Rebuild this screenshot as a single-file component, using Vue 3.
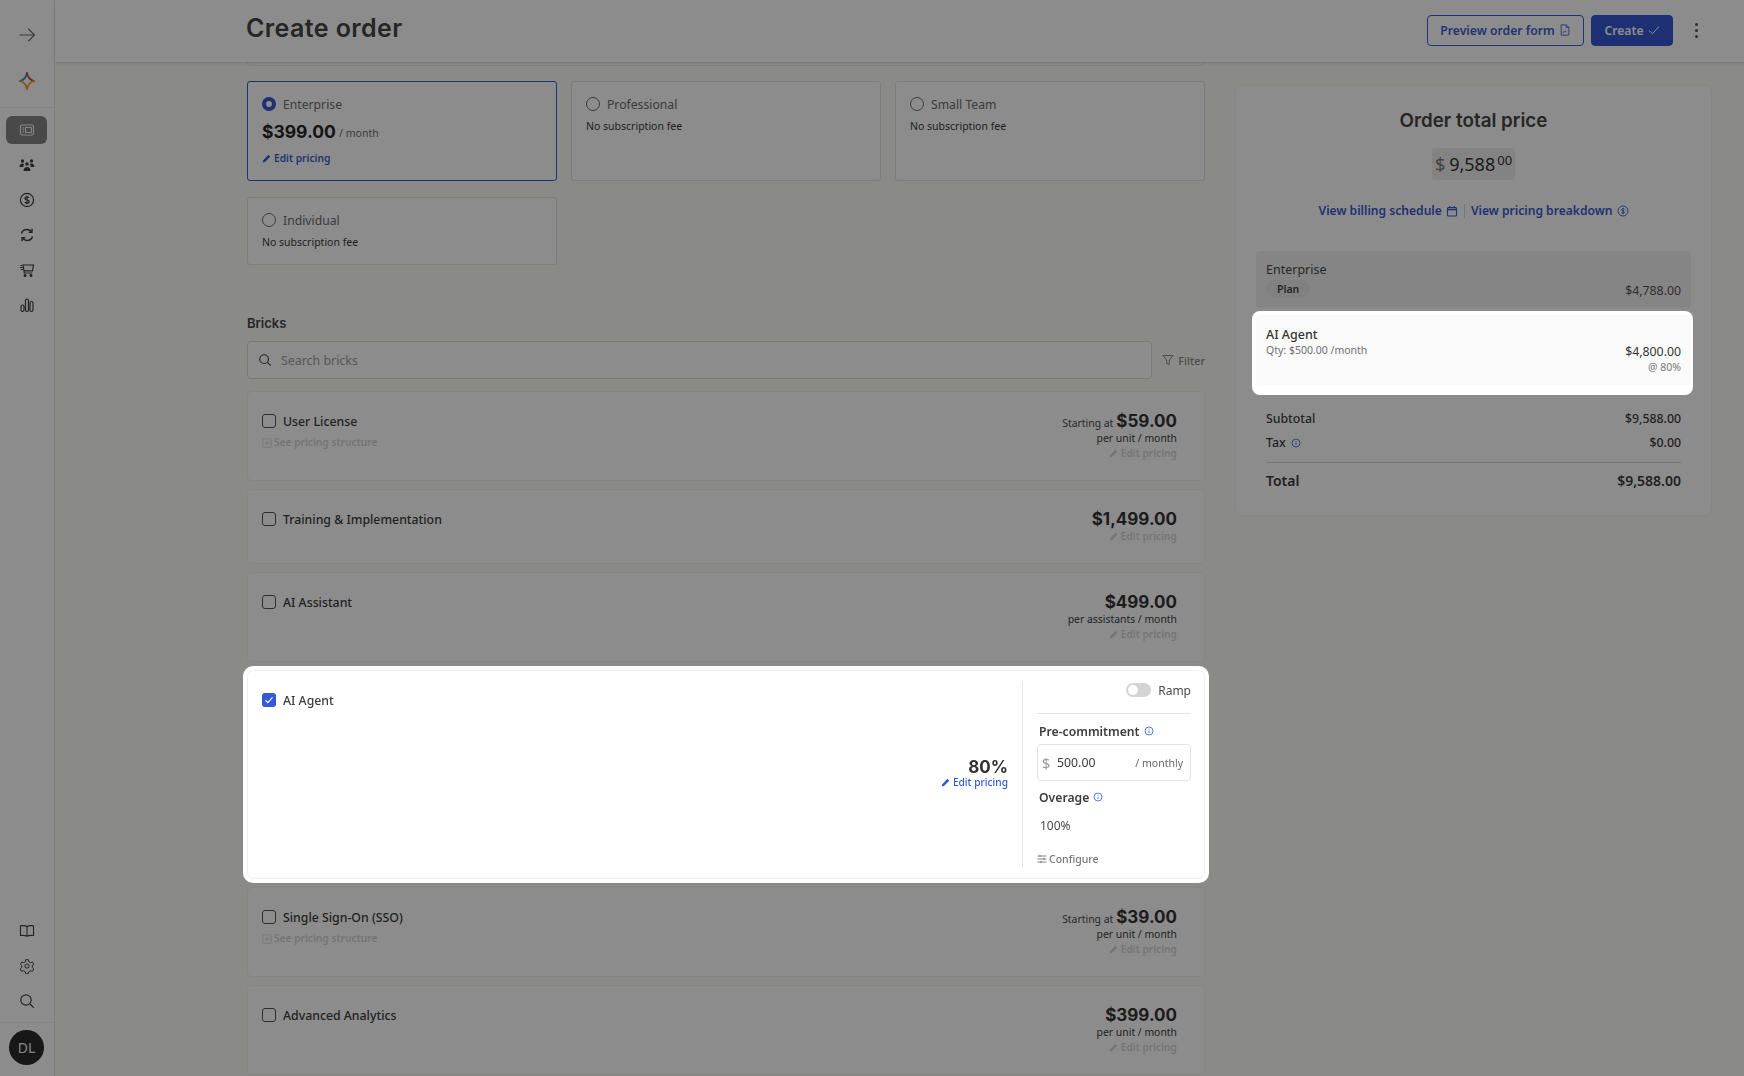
<template>
  <div class="page">
    <aside class="sidebar">
      <div class="side-top">
        <svg class="ico20" viewBox="0 0 24 24" fill="none" stroke="currentColor" stroke-width="1.3"><path d="M3 12h18M13.500 4.500 21 12l-7.500 7.500" /></svg>
      </div>
      <div class="side-logo">
        <svg width="18" height="20" viewBox="0 0 18 20" fill="none" stroke-width="1.8" stroke-linecap="round">
          <path d="M9 2C8.400 6 6.500 8.600 2 10" stroke="#3f9a9a" />
          <path d="M9 2c.6 4 2.500 6.600 7 8" stroke="#c74f4f" />
          <path d="M2 10c4.500 1.400 6.400 4 7 8" stroke="#e6952f" />
          <path d="M16 10c-4.500 1.400-6.400 4-7 8" stroke="#f0a030" />
        </svg>
      </div>
      <nav class="side-nav">
        <a class="nav-item active">
          <svg class="ico16" viewBox="0 0 16 16" fill="none" stroke="currentColor" stroke-width="1.1"><rect x="1.500" y="3" width="13" height="10" rx="1.500" /><path d="M3.500 6h1.500M3.500 8h1.500M3.500 10h1.500M6.500 5.500h6v5h-6z" /></svg>
        </a>
        <a class="nav-item">
          <svg class="ico16" viewBox="0 0 16 16" fill="currentColor"><circle cx="3.500" cy="4" r="1.700" /><circle cx="12.500" cy="4" r="1.700" /><circle cx="8" cy="7" r="1.800" /><path d="M.5 10c0-2 1.300-3.500 3-3.500.8 0 1.300.3 1.700.7-.6.7-.9 1.500-.9 2.800zM15.500 10c0-2-1.300-3.500-3-3.500-.8 0-1.300.3-1.700.7.6.7.9 1.500.9 2.800z" /><path d="M4.500 14c0-2.500 1.500-4 3.500-4s3.500 1.500 3.500 4z" /></svg>
        </a>
        <a class="nav-item">
          <svg class="ico16" viewBox="0 0 16 16" fill="none" stroke="currentColor" stroke-width="1.200"><circle cx="8" cy="8" r="6.600" /><path d="M10 5.800C9.500 5 8.800 4.800 8 4.800c-1.200 0-2 .6-2 1.600 0 2.200 4.200 1 4.200 3.200 0 1-.9 1.600-2.200 1.600-.9 0-1.700-.3-2.200-1.100M8 3.800v8.400" /></svg>
        </a>
        <a class="nav-item">
          <svg class="ico16" viewBox="0 0 16 16" fill="none" stroke="currentColor" stroke-width="1.400"><path d="M2.500 6.500C3.200 4 5.300 2.500 8 2.500c1.800 0 3.300.8 4.500 2.200M13.500 9.500C12.800 12 10.700 13.500 8 13.500c-1.800 0-3.300-.8-4.500-2.200" /><path d="M13 1.800v3.400H9.700M3 14.200v-3.400h3.300" /></svg>
        </a>
        <a class="nav-item">
          <svg class="ico16" viewBox="0 0 16 16" fill="none" stroke="currentColor" stroke-width="1.200"><path d="M4 3h10.500l-1 5.800H5L4 3zM5 8.800l.2 2.200h8M1.500 3.500H3M1 5.500h2.500M1.800 7.500h2" /><circle cx="6" cy="13.500" r=".9" fill="currentColor" /><circle cx="12" cy="13.500" r=".9" fill="currentColor" /></svg>
        </a>
        <a class="nav-item">
          <svg class="ico16" viewBox="0 0 16 16" fill="none" stroke="currentColor" stroke-width="1.200"><rect x="2" y="8" width="3" height="6.500" rx="1.500" /><rect x="6.500" y="2" width="3" height="12.500" rx="1.500" /><rect x="11" y="4.500" width="3" height="10" rx="1.500" /></svg>
        </a>
      </nav>
      <nav class="side-bottom">
        <a class="nav-item">
          <svg class="ico16" viewBox="0 0 16 16" fill="none" stroke="currentColor" stroke-width="1.100"><path d="M8 3.500C6.500 2.600 4 2.500 1.500 2.800v9.700c2.500-.3 5-.2 6.500.8 1.500-1 4-1.100 6.500-.8V2.800C12 2.500 9.500 2.600 8 3.500zM8 3.500v9.800" /></svg>
        </a>
        <a class="nav-item">
          <svg class="ico16" viewBox="0 0 24 24" fill="none" stroke="currentColor" stroke-width="1.500"><circle cx="12" cy="12" r="3.200" /><path d="M10 2.500h4l.7 3 2.500 1.400 3-.9 2 3.500-2.300 2.100v2.800l2.300 2.100-2 3.500-3-.9-2.500 1.400-.7 3h-4l-.7-3-2.500-1.400-3 .9-2-3.500 2.300-2.100v-2.800L2.300 9.500l2-3.500 3 .9 2.500-1.400z" /></svg>
        </a>
        <a class="nav-item">
          <svg class="ico16" viewBox="0 0 16 16" fill="none" stroke="currentColor" stroke-width="1.200"><circle cx="7" cy="7" r="5.200" /><path d="m11 11 3.800 3.800" /></svg>
        </a>
      </nav>
      <div class="side-user">
        <div class="avatar">DL</div>
      </div>
    </aside>

    <div class="main">
      <header class="topbar">
        <h1>Create order</h1>
        <div class="top-actions">
          <button class="btn btn-outline">
            Preview order form
            <svg class="ico12" viewBox="0 0 12 14" fill="none" stroke="currentColor" stroke-width="1"><path d="M1.500 1h6l3 3v9h-9zM7.500 1v3h3M3.500 10.500l1.500-2 1 1 1.500-1.500" /></svg>
          </button>
          <button class="btn btn-primary">
            Create
            <svg class="ico12" viewBox="0 0 12 12" fill="none" stroke="currentColor" stroke-width="1"><path d="m1 6.500 3.500 3.200L11 2.500" /></svg>
          </button>
          <div class="kebab"><i></i><i></i><i></i></div>
        </div>
      </header>

      <div class="content">
        <section class="left">
          <div class="cut-card"></div>
          <div class="plans">
            <div v-for="plan in plans" :key="plan.name" class="plan" :class="{ selected: plan.selected }">
              <div class="plan-name">
                <span class="radio"></span>
                {{ plan.name }}
              </div>
              <template v-if="plan.selected">
                <div class="plan-price"><b>$399.00</b> <span>/ month</span></div>
                <a class="edit">
                  <svg class="pen" viewBox="0 0 12 12" fill="currentColor"><path d="M8.500 1 11 3.500 4 10.500l-3 .7.700-3z" /></svg>
                  Edit pricing
                </a>
              </template>
              <div v-else class="plan-fee">No subscription fee</div>
            </div>
          </div>

          <h2 class="bricks-title">Bricks</h2>
          <div class="search-row">
            <div class="search">
              <svg class="ico14" viewBox="0 0 16 16" fill="none" stroke="currentColor" stroke-width="1.300"><circle cx="7" cy="7" r="5" /><path d="m10.800 10.800 3.700 3.700" /></svg>
              <span>Search bricks</span>
            </div>
            <div class="filter">
              <svg class="ico12" viewBox="0 0 12 12" fill="none" stroke="currentColor" stroke-width="1"><path d="M1 1.500h10L7.300 6v4.500l-2.600-1V6z" /></svg>
              Filter
            </div>
          </div>

          <div class="bricks">
            <template v-for="brick in bricks" :key="brick.name">
              <div v-if="brick.active" class="brick ai-brick">
                <div class="ai-main">
                  <label class="check-row">
                    <span class="check checked">
                      <svg viewBox="0 0 12 12" fill="none" stroke="#fff" stroke-width="1"><path d="m3 6.200 2 2 4-4.400" /></svg>
                    </span>
                    {{ brick.name }}
                  </label>
                  <div class="ai-price">
                    <div class="amount">80%</div>
                    <a class="edit edit-live">
                      <svg class="pen" viewBox="0 0 12 12" fill="currentColor"><path d="M8.500 1 11 3.500 4 10.500l-3 .7.700-3z" /></svg>
                      Edit pricing
                    </a>
                  </div>
                </div>
                <div class="ai-side">
                  <div class="ramp"><span class="toggle"><i></i></span>Ramp</div>
                  <div class="field-label first">
                    Pre-commitment
                    <svg class="info" viewBox="0 0 12 12" fill="none" stroke="currentColor"><circle cx="6" cy="6" r="4.800" /><path d="M6 5.500v3M6 3.300v1" /></svg>
                  </div>
                  <div class="commit">
                    <span class="cur">$</span><span class="val">500.00</span><span class="per">/ monthly</span>
                  </div>
                  <div class="field-label over">
                    Overage
                    <svg class="info" viewBox="0 0 12 12" fill="none" stroke="currentColor"><circle cx="6" cy="6" r="4.800" /><path d="M6 5.500v3M6 3.300v1" /></svg>
                  </div>
                  <div class="overage">100%</div>
                  <div class="configure">
                    <svg class="ico10" viewBox="0 0 10 10" fill="none" stroke="currentColor" stroke-width=".9"><path d="M.5 2h9M.5 5h9M.5 8h9" /><path d="M3 .8v2.400M7 3.800v2.400M4 6.800v2.400" /></svg>
                    Configure
                  </div>
                </div>
              </div>

              <div v-else class="brick">
                <div class="brick-left">
                  <label class="check-row"><span class="check"></span>{{ brick.name }}</label>
                  <div v-if="brick.structure" class="structure">
                    <svg class="ico10" viewBox="0 0 10 10" fill="none" stroke="currentColor" stroke-width=".9"><rect x=".8" y=".8" width="8.400" height="8.400" rx="1" /><path d="M3 5h4M5 3v4" /></svg>
                    See pricing structure
                  </div>
                </div>
                <div class="brick-right">
                  <div class="amount-row"><span v-if="brick.from" class="from">Starting at</span><span class="amount">{{ brick.price }}</span></div>
                  <div v-if="brick.unit" class="unit">{{ brick.unit }}</div>
                  <a class="edit edit-off">
                    <svg class="pen" viewBox="0 0 12 12" fill="currentColor"><path d="M8.500 1 11 3.500 4 10.500l-3 .7.700-3z" /></svg>
                    Edit pricing
                  </a>
                </div>
              </div>
            </template>
          </div>
        </section>

        <section class="summary">
          <h2>Order total price</h2>
          <div class="total-box"><span class="cur">$</span> 9,588<sup>00</sup></div>
          <div class="links">
            <a>View billing schedule
              <svg class="ico12" viewBox="0 0 12 12" fill="none" stroke="currentColor" stroke-width="1.100"><rect x="1.500" y="2.500" width="9" height="8.500" rx="1" /><path d="M1.500 4.500h9" stroke-width="1.600" /><path d="M3.800 1v2M8.200 1v2" /></svg>
            </a>
            <span class="sep"></span>
            <a>View pricing breakdown
              <svg class="ico12" viewBox="0 0 12 12" fill="none" stroke="currentColor" stroke-width=".9"><circle cx="6" cy="6" r="5" /><path d="M7.500 4.300C7 3.700 5 3.500 4.700 4.600 4.400 6 7.600 5.700 7.400 7.400 7.200 8.500 5 8.400 4.400 7.600M6 2.800v6.400" /></svg>
            </a>
          </div>

          <div class="row-plan">
            <div class="item-name">Enterprise</div>
            <div class="row-plan-bottom">
              <span class="badge">Plan</span>
              <span class="item-amt">$4,788.00</span>
            </div>
          </div>

          <div class="spot">
            <div class="spot-row">
              <div>
                <div class="item-name strong">AI Agent</div>
                <div class="item-sub">Qty: $500.00 /month</div>
              </div>
              <div class="spot-right">
                <div class="item-amt strong">$4,800.00</div>
                <div class="item-rate">@ 80%</div>
              </div>
            </div>
          </div>

          <div class="totals">
            <div class="tot-row"><span>Subtotal</span><span>$9,588.00</span></div>
            <div class="tot-row">
              <span>Tax
                <svg class="info tax-info" viewBox="0 0 12 12" fill="none" stroke="currentColor"><circle cx="6" cy="6" r="4.800" /><path d="M6 5.500v3M6 3.300v1" /></svg>
              </span>
              <span>$0.00</span>
            </div>
            <div class="tot-row grand"><span>Total</span><span>$9,588.00</span></div>
          </div>
        </section>
      </div>
    </div>

    <div class="overlay"></div>
  </div>
</template>

<script setup>
const plans = [
  { name: 'Enterprise', selected: true },
  { name: 'Professional' },
  { name: 'Small Team' },
  { name: 'Individual' },
];

const bricks = [
  { name: 'User License', structure: true, from: true, price: '$59.00', unit: 'per unit / month' },
  { name: 'Training & Implementation', price: '$1,499.00' },
  { name: 'AI Assistant', price: '$499.00', unit: 'per assistants / month' },
  { name: 'AI Agent', active: true },
  { name: 'Single Sign-On (SSO)', structure: true, from: true, price: '$39.00', unit: 'per unit / month' },
  { name: 'Advanced Analytics', price: '$399.00', unit: 'per unit / month' },
];
</script>

<style>
html,
body {
  margin: 0;
  height: 100%;
  overflow: hidden;
}
</style>

<style scoped>
.page {
  display: flex;
  height: 100vh;
  overflow: hidden;
  background: #fcfbf9;
  color: #404040;
  font-family: "Noto Sans", "Open Sans", sans-serif;
  font-size: 12.300px;
}

.overlay {
  position: fixed;
  inset: 0;
  z-index: 10;
  background: rgba(0, 0, 0, 0.45);
}

svg {
  flex: none;
}

.ico10 { width: 10px; height: 10px; }
.ico11 { width: 11px; height: 11px; }
.ico12 { width: 12px; height: 12px; }
.ico14 { width: 14px; height: 14px; }
.ico16 { width: 16px; height: 16px; }
.ico20 { width: 20px; height: 20px; }

/* Sidebar */
.sidebar {
  width: 54px;
  flex: none;
  display: flex;
  flex-direction: column;
  align-items: stretch;
  background: #fff;
  border-right: 1px solid #ececec;
  color: #404040;
}

.side-top {
  height: 62px;
  display: flex;
  align-items: center;
  justify-content: center;
  padding-top: 7px;
  box-sizing: border-box;
  color: #6a6a6a;
}

.side-logo {
  height: 46px;
  display: flex;
  align-items: center;
  justify-content: center;
  border-bottom: 1px solid #f3f3f3;
  box-sizing: border-box;
  padding-bottom: 7px;
}

.side-nav {
  padding-top: 4px;
  flex: 1;
}

.nav-item {
  height: 35px;
  display: flex;
  align-items: center;
  justify-content: center;
}

.nav-item.active {
  height: 28px;
  margin: 4px 7px 3px 6px;
  background: #868686;
  border-radius: 6px;
  color: #f4f4f4;
}

.side-bottom {
  padding-bottom: 4px;
  border-bottom: 1px solid #f3f3f3;
}

.side-user {
  display: flex;
  justify-content: center;
  padding: 7px 1px 11px 0;
}

.avatar {
  width: 35px;
  height: 35px;
  border-radius: 50%;
  background: #2a2a2a;
  color: #f0f0f0;
  display: flex;
  align-items: center;
  justify-content: center;
  font-size: 14px;
}

/* Main */
.main {
  flex: 1;
  min-width: 0;
  display: flex;
  flex-direction: column;
}

.topbar {
  height: 62px;
  flex: none;
  display: flex;
  align-items: center;
  justify-content: space-between;
  box-sizing: border-box;
  padding: 0 42px 0 191px;
  background: #fff;
  box-shadow: 0 1px 3px rgba(0, 0, 0, 0.14);
  position: relative;
}

.topbar h1 {
  margin: 0 0 6px;
  font-family: Inter, sans-serif;
  font-size: 25px;
  font-weight: 600;
  letter-spacing: 0.4px;
  color: #464646;
}

.top-actions {
  display: flex;
  align-items: center;
  gap: 7px;
  margin-bottom: 2px;
}

.btn {
  height: 31px;
  box-sizing: border-box;
  display: flex;
  align-items: center;
  gap: 4px;
  border-radius: 4px;
  font-family: inherit;
  font-size: 12.200px;
  font-weight: 600;
}

.btn-outline {
  width: 157px;
  justify-content: center;
  padding: 0;
  background: transparent;
  border: 1px solid #3a60d8;
  color: #3a60d8;
}

.btn-primary {
  width: 82px;
  justify-content: center;
  padding: 0;
  background: #3558d4;
  border: 1px solid #3558d4;
  color: #fff;
}

.kebab {
  width: 12px;
  margin-left: 10px;
  display: flex;
  flex-direction: column;
  align-items: center;
  gap: 3px;
}

.kebab i {
  width: 3px;
  height: 3px;
  border-radius: 50%;
  background: #555;
}

.content {
  flex: 1;
  display: flex;
  align-items: flex-start;
  gap: 30px;
  padding-left: 192px;
  min-height: 0;
}

.left {
  width: 958px;
  flex: none;
}

.cut-card {
  height: 4px;
  box-sizing: border-box;
  border: 1px solid #e8e8e8;
  border-top: 0;
  border-radius: 0 0 4px 4px;
  margin-bottom: 15px;
}

/* Plans */
.plans {
  display: grid;
  grid-template-columns: repeat(3, 310px);
  grid-template-rows: 100px 68px;
  gap: 16px 14px;
}

.plan {
  box-sizing: border-box;
  background: #fff;
  border: 1px solid #e4e4e4;
  border-radius: 3px;
  padding: 13px 14px 0;
}

.plan.selected {
  border-color: #3a5ccf;
}

.plan-name {
  display: flex;
  align-items: center;
  gap: 7px;
  height: 18px;
  font-size: 12.200px;
  color: #6c6c6c;
}

.radio {
  width: 14px;
  height: 14px;
  box-sizing: border-box;
  border: 1px solid #707070;
  border-radius: 50%;
}

.selected .radio {
  border: 4px solid #3558d4;
}

.plan-price {
  margin-top: 7px;
  line-height: 24px;
}

.plan-price b {
  font-family: Inter, sans-serif;
  font-size: 17.500px;
  font-weight: 700;
  color: #262626;
}

.plan-price span {
  position: relative;
  top: -1px;
  font-size: 10.500px;
  color: #6c6c6c;
}

.plan-fee {
  margin-top: 5px;
  font-size: 10.500px;
  line-height: 16px;
  color: #3a3a3a;
}

.edit {
  display: flex;
  align-items: center;
  gap: 3px;
  height: 15px;
  font-size: 10.200px;
  font-weight: 600;
  line-height: 15px;
  color: #3a5ccf;
}

.plan .edit {
  margin-top: 5px;
}

.pen {
  width: 9px;
  height: 9px;
}

.edit-off {
  justify-content: flex-end;
  color: #d6d6d6;
}

.edit-live {
  justify-content: flex-end;
  margin-top: -3px;
  font-weight: 500;
  color: #2f5bd8;
}

/* Bricks */
.bricks-title {
  margin: 48px 0 8px;
  font-family: Inter, sans-serif;
  font-size: 13px;
  font-weight: 600;
  line-height: 20px;
  color: #454545;
}

.search-row {
  display: flex;
  align-items: center;
  justify-content: space-between;
}

.search {
  width: 905px;
  height: 38px;
  box-sizing: border-box;
  display: flex;
  align-items: center;
  gap: 9px;
  padding: 0 10px;
  background: #fff;
  border: 1px solid #dcdcdc;
  border-radius: 4px;
  color: #444;
}

.search span {
  font-size: 12.400px;
  color: #9e9e9e;
}

.filter {
  display: flex;
  align-items: center;
  gap: 4px;
  font-size: 10.900px;
  font-weight: 500;
  color: #8a8a8a;
}

.bricks {
  display: flex;
  flex-direction: column;
  gap: 8px;
  margin-top: 12px;
}

.brick {
  box-sizing: border-box;
  display: flex;
  justify-content: space-between;
  padding: 19px 27px 19px 14px;
  min-height: 75px;
  background: #fff;
  border: 1px solid #f4f3f1;
  border-radius: 4px;
}

.brick-left {
  padding-top: 3px;
}

.check-row {
  display: flex;
  align-items: center;
  gap: 7px;
  height: 14px;
  font-size: 12.300px;
  font-weight: 500;
  color: #3c3c3c;
  cursor: default;
}

.check {
  width: 14px;
  height: 14px;
  box-sizing: border-box;
  border: 1px solid #555;
  border-radius: 3px;
}

.check.checked {
  display: flex;
  border: 0;
  background: #3358d4;
}

.structure {
  display: flex;
  align-items: center;
  gap: 2px;
  margin-top: 7px;
  font-size: 10.200px;
  font-weight: 600;
  line-height: 15px;
  color: #d6d6d6;
}

.brick-right {
  text-align: right;
}

.amount-row {
  display: flex;
  align-items: baseline;
  justify-content: flex-end;
  gap: 3px;
  height: 20px;
  line-height: 20px;
}

.from {
  font-size: 10.400px;
  color: #4a4a4a;
}

.amount {
  font-family: Inter, sans-serif;
  font-size: 17px;
  font-weight: 700;
  color: #333;
}

.unit {
  height: 15px;
  font-size: 10.400px;
  line-height: 15px;
  color: #3c3c3c;
}

/* Active brick */
.ai-brick {
  position: relative;
  z-index: 20;
  height: 209px;
  padding: 11px 13px 11px 14px;
  border-color: #f0f0f0;
  border-radius: 6px;
  box-shadow: 0 0 0 4px #fff;
}

.ai-main {
  flex: 1;
  padding: 11px 14px 0 0;
}

.ai-price {
  margin-top: 50px;
  text-align: right;
}

.ai-price .amount {
  line-height: 21px;
}

.ai-side {
  width: 169px;
  flex: none;
  box-sizing: border-box;
  padding-left: 14px;
  border-left: 1px solid #e4e4e4;
}

.ramp {
  display: flex;
  align-items: center;
  justify-content: flex-end;
  gap: 7px;
  height: 16px;
  padding-bottom: 15px;
  border-bottom: 1px solid #e6e6e6;
  font-size: 12px;
  color: #4a4a4a;
}

.toggle {
  width: 25px;
  height: 14px;
  box-sizing: border-box;
  padding: 2px;
  border-radius: 7px;
  background: #d4d4d4;
}

.toggle i {
  display: block;
  width: 10px;
  height: 10px;
  border-radius: 50%;
  background: #fff;
}

.field-label {
  display: flex;
  align-items: center;
  gap: 4px;
  height: 18px;
  padding-left: 2px;
  font-size: 12.200px;
  font-weight: 600;
  color: #3c3c3c;
}

.field-label.first {
  margin-top: 8px;
}

.field-label.over {
  margin-top: 7px;
}

.info {
  width: 10px;
  height: 10px;
  color: #3a66d8;
}

.commit {
  height: 37px;
  box-sizing: border-box;
  display: flex;
  align-items: center;
  margin-top: 4px;
  padding: 0 7px 0 4px;
  border: 1px solid #e2e2e2;
  border-radius: 4px;
}

.commit .cur {
  width: 15px;
  font-size: 14.500px;
  color: #999;
}

.commit .val {
  flex: 1;
  font-size: 12.300px;
  color: #3a3a3a;
}

.commit .per {
  font-size: 10.500px;
  color: #666;
}

.overage {
  margin-top: 11px;
  padding-left: 3px;
  font-size: 12px;
  line-height: 18px;
  color: #4a4a4a;
}

.configure {
  display: flex;
  align-items: center;
  gap: 2px;
  margin-top: 16px;
  font-size: 10.500px;
  font-weight: 500;
  line-height: 16px;
  color: #777;
}

/* Summary */
.summary {
  width: 477px;
  height: 431px;
  flex: none;
  box-sizing: border-box;
  margin-top: 23px;
  padding: 23px 20px 0;
  background: #fff;
  border: 1px solid #f4f4f4;
  border-radius: 6px;
}

.summary h2 {
  margin: 0;
  text-align: center;
  font-family: Inter, sans-serif;
  font-size: 18.800px;
  font-weight: 600;
  line-height: 24px;
  color: #464646;
}

.total-box {
  width: 83px;
  height: 32px;
  margin: 15px auto 0;
  box-sizing: border-box;
  display: flex;
  align-items: center;
  justify-content: center;
  gap: 4px;
  background: #efefef;
  border-radius: 3px;
  font-size: 18px;
  color: #333;
}

.total-box .cur {
  color: #777;
  font-size: 18px;
}

.total-box sup {
  font-size: 13px;
  line-height: 1;
  margin: -8px 0 0 -2px;
}

.links {
  display: flex;
  align-items: center;
  justify-content: center;
  gap: 6px;
  margin-top: 22px;
  line-height: 18px;
  font-size: 12.100px;
  font-weight: 600;
  color: #3a5ccf;
}

.links a {
  display: flex;
  align-items: center;
  gap: 4px;
}

.sep {
  width: 1px;
  height: 14px;
  background: #d8d8d8;
}

.row-plan {
  height: 57px;
  margin-top: 31px;
  box-sizing: border-box;
  padding: 10px 10px 0;
  background: #f2f2f2;
  border-radius: 4px;
}

.item-name {
  font-size: 12.500px;
  line-height: 18px;
  color: #4a4a4a;
}

.item-name.strong {
  font-weight: 500;
  color: #333;
}

.row-plan-bottom {
  display: flex;
  align-items: center;
  justify-content: space-between;
}

.badge {
  height: 18px;
  padding: 0 11px;
  background: #ececec;
  border-radius: 9px;
  font-size: 10.500px;
  font-weight: 600;
  line-height: 18px;
  color: #444;
}

.row-plan-bottom .item-amt {
  margin-top: 3px;
}

.item-amt {
  font-size: 12.300px;
  color: #555;
}

.item-amt.strong {
  line-height: 16px;
  color: #333;
}

.spot {
  position: relative;
  z-index: 20;
  margin: 3px -2px -10px -4px;
  padding: 4px 2px 10px 4px;
  background: #fff;
  border-radius: 8px;
}

.spot-row {
  height: 70px;
  box-sizing: border-box;
  display: flex;
  justify-content: space-between;
  padding: 11px 10px 0;
  background: #fafafa;
  border-radius: 4px;
}

.item-sub {
  margin-top: -1px;
  font-size: 10.500px;
  line-height: 14px;
  color: #707070;
}

.spot-right {
  padding-top: 18px;
  text-align: right;
}

.item-rate {
  font-size: 10.500px;
  line-height: 14px;
  color: #777;
}

.totals {
  margin: 25px 10px 0;
}

.tot-row {
  display: flex;
  justify-content: space-between;
  height: 18px;
  margin-bottom: 6px;
  font-size: 12.300px;
  font-weight: 500;
  line-height: 18px;
  color: #404040;
}

.tax-info {
  margin-left: 2px;
  vertical-align: -1px;
}

.tot-row.grand {
  height: 30px;
  margin: 10px 0 0;
  padding-top: 7px;
  border-top: 1px solid #d8d8d8;
  font-size: 14px;
  font-weight: 600;
  line-height: 22px;
  color: #3c3c3c;
}
</style>
